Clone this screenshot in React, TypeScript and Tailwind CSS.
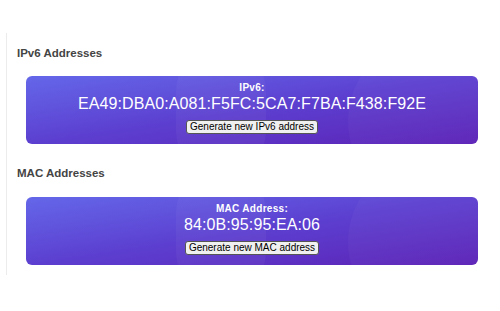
import React from 'react';

const AddressCard = ({ label, value, button }: { label: string; value: string; button: string }) => (
  <div className="relative overflow-hidden rounded-md bg-gradient-to-br from-[#6467e9] via-[#5c3fd0] to-[#5b21b6] h-[68px] flex flex-col items-center pt-[5px] text-white">
    {/* faint decorative circles */}
    <div className="absolute left-[150px] top-[-30px] w-[90px] h-[130px] rounded-full bg-white/[0.04]" />
    <div className="absolute right-[-40px] top-[-40px] w-[170px] h-[170px] rounded-full bg-white/[0.03]" />
    <div className="relative text-[10px] font-bold leading-[13px] tracking-[0.3px]">{label}</div>
    <div className="relative text-[16px] leading-[20px] tracking-[0.1px]">{value}</div>
    <button className="relative mt-[6px] px-[3px] h-[14px] text-[10px] leading-[12px] text-black bg-[#f0f0f0] border border-[#555] rounded-[3px]">
      {button}
    </button>
  </div>
);

export default function App() {
  return (
    <div className="w-[500px] h-[311px] bg-white font-['Liberation_Sans',Arial,sans-serif] pt-[33px] pl-[6px]">
      <div className="border-l border-[#ececec] h-[242px] pl-[10px] pr-[22px]">
        <h2 className="text-[11.5px] font-bold text-[#444] pt-[13px] leading-[14px]">IPv6 Addresses</h2>
        <div className="mt-[16px] ml-[9px]">
          <AddressCard label="IPv6:" value="EA49:DBA0:A081:F5FC:5CA7:F7BA:F438:F92E" button="Generate new IPv6 address" />
        </div>
        <h2 className="text-[11.5px] font-bold text-[#444] mt-[22px] leading-[14px]">MAC Addresses</h2>
        <div className="mt-[17px] ml-[9px]">
          <AddressCard label="MAC Address:" value="84:0B:95:95:EA:06" button="Generate new MAC address" />
        </div>
      </div>
    </div>
  );
}
